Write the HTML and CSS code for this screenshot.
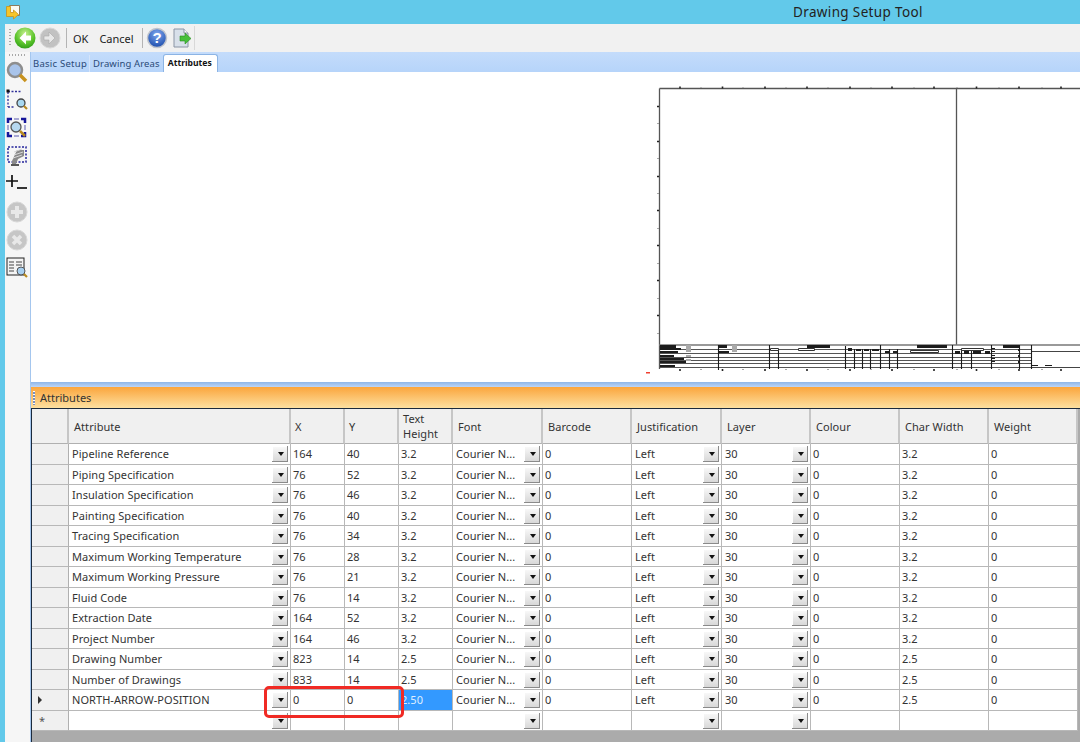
FILE: index.html
```html
<!DOCTYPE html>
<html lang="en">
<head>
<meta charset="utf-8">
<title>Drawing Setup Tool</title>
<link rel="stylesheet" href="styles.css">
</head>
<body>
<div class="app">
  <header class="titlebar">
    <svg class="appicon" width="16" height="16" viewBox="0 0 16 16"><path d="M4.500 1.500h10v10h-10z" fill="#fbfbf4" stroke="#8c7c60"/><path d="M1.500 2.500h4v6h3V6l5 4.500-5 4.500v-2.500h-7z" fill="#f7c52a" stroke="#c8921a" stroke-width=".8"/></svg>
    <div class="apptitle">Drawing Setup Tool</div>
  </header>
  <div class="main">
    <div class="toolbar">
      <div class="grip"></div>
      <svg class="tb back" width="22" height="22" viewBox="0 0 22 22"><defs><radialGradient id="g" cx=".5" cy=".3" r=".75"><stop offset="0" stop-color="#c8f090"/><stop offset=".6" stop-color="#5cc42c"/><stop offset="1" stop-color="#2a9a14"/></radialGradient></defs><circle cx="11" cy="11" r="10.500" fill="url(#g)"/><path d="M12 4.500L5.500 11l6.500 6.500v-4h5v-5h-5z" fill="#fff"/></svg>
      <svg class="tb fwd" width="22" height="22" viewBox="0 0 22 22"><circle cx="11" cy="11" r="10" fill="#c2c2c2" stroke="#d8d8d8"/><path d="M10 5l6 6-6 6v-4H5V9h5z" fill="#e8e8e8" stroke="#a8a8a8" stroke-width=".6"/></svg>
      <span class="sep s1"></span>
      <span class="tbtext ok">OK</span>
      <span class="tbtext cancel">Cancel</span>
      <span class="sep s2"></span>
      <svg class="tb help" width="22" height="22" viewBox="0 0 22 22"><defs><radialGradient id="h" cx=".5" cy=".3" r=".75"><stop offset="0" stop-color="#7fa8ee"/><stop offset="1" stop-color="#1546a8"/></radialGradient></defs><circle cx="11" cy="11" r="9.500" fill="url(#h)" stroke="#c0c4cc" stroke-width="1.500"/><text x="11" y="16" text-anchor="middle" class="qm">?</text></svg>
      <svg class="tb export" width="20" height="22" viewBox="0 0 20 22"><path d="M2 2h10l4 4v14H2z" fill="#d8e0ea" stroke="#8a94a4"/><path d="M12 2v4h4" fill="#fff" stroke="#8a94a4"/><path d="M8 9h5V6l6 5.500-6 5.500v-3H8z" fill="#46c03a" stroke="#2c8a24" stroke-width=".6"/></svg>
      <span class="tbend"></span>
    </div>
    <div class="body">
      <aside class="side">
        <div class="sgrip"></div>
        <svg width="22" height="22" viewBox="0 0 22 22"><circle cx="9" cy="9" r="7" fill="#a9c4ea" stroke="#8e8e8e" stroke-width="2.500"/><path d="M14 14l6 6" stroke="#c8921e" stroke-width="3.500"/></svg>
        <svg width="22" height="22" viewBox="0 0 22 22"><path d="M2 2.500h13M2 3v15M2 18h6" stroke="#30309a" stroke-width="1.300" stroke-dasharray="2 1.500" fill="none"/><rect x="0.500" y="0.500" width="3" height="3" fill="#111"/><circle cx="15" cy="14" r="4" fill="#a8d8f0" stroke="#444" stroke-width="1.300"/><path d="M18 17l3 3" stroke="#b88a20" stroke-width="2.200"/></svg>
        <svg width="22" height="22" viewBox="0 0 22 22"><path d="M2 6V2h4M15 2h4v4M19 15v4h-4M6 19H2v-4" fill="none" stroke="#16169a" stroke-width="2.500"/><path d="M8 2h5M2 8v5M19 8v5M8 19h5" stroke="#5a5ab0"/><circle cx="10" cy="10" r="5" fill="#b6d8f0" stroke="#555" stroke-width="1.300"/><path d="M14 14l5 5" stroke="#b88a20" stroke-width="2.500"/></svg>
        <svg width="22" height="22" viewBox="0 0 22 22"><rect x="2" y="2" width="18" height="15" fill="none" stroke="#22229a" stroke-dasharray="2 1.500" stroke-width="1.500"/><path d="M6 16l5-11h7v6l-6 3-2 5H6z" fill="#8a8a8a"/><path d="M8 7l8-3M8 10l9-3M7 13l9-3" stroke="#d8d8d8"/><path d="M5 20h8" stroke="#222" stroke-width="1.500"/></svg>
        <svg width="22" height="22" viewBox="0 0 22 22"><path d="M6 2v12M0 8h12" stroke="#111" stroke-width="1.700"/><path d="M11 15h10" stroke="#111" stroke-width="1.700"/></svg>
        <svg width="22" height="22" viewBox="0 0 22 22"><circle cx="11" cy="11" r="10" fill="#c6c6c6" stroke="#d8d8d8"/><path d="M11 5v12M5 11h12" stroke="#e8e8e8" stroke-width="4"/></svg>
        <svg width="22" height="22" viewBox="0 0 22 22"><circle cx="11" cy="11" r="10" fill="#c6c6c6" stroke="#d8d8d8"/><path d="M7 7l8 8M15 7l-8 8" stroke="#e8e8e8" stroke-width="3.500"/></svg>
        <svg width="22" height="22" viewBox="0 0 22 22"><rect x="1" y="1" width="17" height="17" fill="#f4f4f4" stroke="#222"/><path d="M3 5h5M10 5h6M3 8h5M10 8h6M3 11h5M3 14h5" stroke="#444"/><circle cx="15" cy="14" r="4" fill="#a8d0f0" stroke="#555"/><path d="M18 17l3 3" stroke="#b88a20" stroke-width="2.200"/></svg>
      </aside>
      <div class="content">
        <nav class="tabs">
          <span class="tab t1">Basic Setup</span>
          <span class="tab t2">Drawing Areas</span>
          <span class="tab active">Attributes</span>
        </nav>
        <section class="preview">
          <svg class="drawing" width="435" height="290" viewBox="645 86 435 290">
            <path d="M659.500 88.500H1080M659.500 88.500V369M956.500 88.500V345" fill="none" stroke="#555" stroke-width="1.300"/>
            <g stroke="#222" stroke-width="1.600" fill="none">
              <path d="M680 86.500v2M722.500 86.500v2M765 86.500v2M807 86.500v2M850 86.500v2M892 86.500v2M934 86.500v2M976.500 86.500v2M1019 86.500v2M1061 86.500v2"/>
              <path d="M657 106.500h2M657 141.500h2M657 176.500h2M657 210.500h2M657 245.500h2M657 280.500h2M657 315.500h2"/>
              <path d="M680 369v2M722.500 369v2M765 369v2M807 369v2M850 369v2M892 369v2M934 369v2M976.500 369v2M1019 369v2M1061 369v2"/>
            </g>
            <g stroke="#555" stroke-width="1" fill="none">
              <path d="M701 87.500v1M743 87.500v1M786 87.500v1M828 87.500v1M871 87.500v1M914 87.500v1M957 87.500v1M999 87.500v1M1042 87.500v1"/>
              <path d="M657.500 123.500h1M657.500 158.500h1M657.500 193.500h1M657.500 228.500h1M657.500 263.500h1M657.500 298.500h1M657.500 333.500h1"/>
              <path d="M701 369v1M743 369v1M786 369v1M828 369v1M871 369v1M914 369v1M957 369v1M999 369v1M1042 369v1"/>
            </g>
            <path d="M659 345H1080" stroke="#777" stroke-width="1.600"/>
            <path d="M659 349.500H1031M659 353.500H1031M659 357.500H1031M659 360.500H1031M659 363.500H1031M659 367.500H1031" stroke="#555" stroke-width="1.200"/>
            <path d="M1031 351.500H1080M1031 367.500H1080" stroke="#444" stroke-width="1"/>
            <path d="M718.500 345V370M769.500 345V369M778.500 349V369M845.500 346V369M854.500 349V369M862.500 349V369M870.500 349V369M880.500 345V369M889.500 349V369M897.500 349V369M952.500 345V369M961.500 349V369M971.500 349V369M991.500 345V369M1019.500 345V369M1031.500 345V369" stroke="#1a1a1a" stroke-width="1.100"/>
            <g fill="#1c1c1c">
              <rect x="660" y="345" width="16" height="3"/><rect x="660" y="348" width="21" height="2"/><rect x="660" y="351" width="18" height="2"/><rect x="660" y="355" width="14" height="2"/><rect x="660" y="358" width="24" height="2"/><rect x="660" y="361" width="26" height="2"/><rect x="660" y="365" width="15" height="2"/>
              <rect x="719" y="345" width="8" height="3"/><rect x="719" y="351" width="10" height="2"/>
              <rect x="807" y="345" width="23" height="3"/><rect x="917" y="345" width="30" height="3"/><rect x="1003" y="345" width="16" height="3"/>
              <rect x="848" y="348" width="4" height="3"/><rect x="856" y="349" width="5" height="2"/><rect x="864" y="349" width="5" height="2"/><rect x="872" y="349" width="7" height="2"/><rect x="885" y="351" width="5" height="2"/><rect x="893" y="351" width="4" height="2"/>
              <rect x="955" y="351" width="5" height="3"/><rect x="964" y="351" width="5" height="3"/><rect x="973" y="351" width="8" height="3"/><rect x="985" y="351" width="5" height="3"/>
              <rect x="991" y="348" width="4" height="1"/><rect x="991" y="351" width="4" height="1"/><rect x="991" y="355" width="4" height="1"/><rect x="991" y="358" width="4" height="1"/><rect x="991" y="361" width="4" height="1"/>
              <rect x="1018" y="349" width="2" height="2"/><rect x="1018" y="355" width="2" height="2"/><rect x="1018" y="361" width="2" height="2"/>
              <rect x="1032" y="365" width="6" height="1"/><rect x="1045" y="365" width="7" height="1"/>
            </g>
            <g fill="#aaa"><rect x="686" y="345" width="5" height="7"/><rect x="732" y="345" width="5" height="7"/><rect x="686" y="355" width="5" height="2"/><rect x="686" y="359" width="5" height="2"/></g>
            <path d="M770.500 348.500h8v2h-8zM798.500 348.500h16v2h-16zM910.500 350.500h28v2h-28zM961.500 348.500h22v2h-22z" fill="#fff" stroke="#333"/>
            <rect x="646" y="372" width="4" height="1.500" fill="#f04030"/>
          </svg>
        </section>
        <div class="splitter"></div>
        <div class="panelhead"><span class="pgrip"></span>Attributes</div>
        <div class="gridwrap">
          <div class="grid">
            <div class="h"></div><div class="h">Attribute</div><div class="h n">X</div><div class="h n">Y</div><div class="h n">Text Height</div><div class="h">Font</div><div class="h">Barcode</div><div class="h">Justification</div><div class="h">Layer</div><div class="h">Colour</div><div class="h">Char Width</div><div class="h">Weight</div>

            <div class="rh"></div><div class="c dd">Pipeline Reference</div><div class="c">164</div><div class="c">40</div><div class="c">3.2</div><div class="c dd">Courier N...</div><div class="c">0</div><div class="c dd">Left</div><div class="c dd">30</div><div class="c">0</div><div class="c">3.2</div><div class="c">0</div>
            <div class="rh"></div><div class="c dd">Piping Specification</div><div class="c">76</div><div class="c">52</div><div class="c">3.2</div><div class="c dd">Courier N...</div><div class="c">0</div><div class="c dd">Left</div><div class="c dd">30</div><div class="c">0</div><div class="c">3.2</div><div class="c">0</div>
            <div class="rh"></div><div class="c dd">Insulation Specification</div><div class="c">76</div><div class="c">46</div><div class="c">3.2</div><div class="c dd">Courier N...</div><div class="c">0</div><div class="c dd">Left</div><div class="c dd">30</div><div class="c">0</div><div class="c">3.2</div><div class="c">0</div>
            <div class="rh"></div><div class="c dd">Painting Specification</div><div class="c">76</div><div class="c">40</div><div class="c">3.2</div><div class="c dd">Courier N...</div><div class="c">0</div><div class="c dd">Left</div><div class="c dd">30</div><div class="c">0</div><div class="c">3.2</div><div class="c">0</div>
            <div class="rh"></div><div class="c dd">Tracing Specification</div><div class="c">76</div><div class="c">34</div><div class="c">3.2</div><div class="c dd">Courier N...</div><div class="c">0</div><div class="c dd">Left</div><div class="c dd">30</div><div class="c">0</div><div class="c">3.2</div><div class="c">0</div>
            <div class="rh"></div><div class="c dd">Maximum Working Temperature</div><div class="c">76</div><div class="c">28</div><div class="c">3.2</div><div class="c dd">Courier N...</div><div class="c">0</div><div class="c dd">Left</div><div class="c dd">30</div><div class="c">0</div><div class="c">3.2</div><div class="c">0</div>
            <div class="rh"></div><div class="c dd">Maximum Working Pressure</div><div class="c">76</div><div class="c">21</div><div class="c">3.2</div><div class="c dd">Courier N...</div><div class="c">0</div><div class="c dd">Left</div><div class="c dd">30</div><div class="c">0</div><div class="c">3.2</div><div class="c">0</div>
            <div class="rh"></div><div class="c dd">Fluid Code</div><div class="c">76</div><div class="c">14</div><div class="c">3.2</div><div class="c dd">Courier N...</div><div class="c">0</div><div class="c dd">Left</div><div class="c dd">30</div><div class="c">0</div><div class="c">3.2</div><div class="c">0</div>
            <div class="rh"></div><div class="c dd">Extraction Date</div><div class="c">164</div><div class="c">52</div><div class="c">3.2</div><div class="c dd">Courier N...</div><div class="c">0</div><div class="c dd">Left</div><div class="c dd">30</div><div class="c">0</div><div class="c">3.2</div><div class="c">0</div>
            <div class="rh"></div><div class="c dd">Project Number</div><div class="c">164</div><div class="c">46</div><div class="c">3.2</div><div class="c dd">Courier N...</div><div class="c">0</div><div class="c dd">Left</div><div class="c dd">30</div><div class="c">0</div><div class="c">3.2</div><div class="c">0</div>
            <div class="rh"></div><div class="c dd">Drawing Number</div><div class="c">823</div><div class="c">14</div><div class="c">2.5</div><div class="c dd">Courier N...</div><div class="c">0</div><div class="c dd">Left</div><div class="c dd">30</div><div class="c">0</div><div class="c">2.5</div><div class="c">0</div>
            <div class="rh"></div><div class="c dd">Number of Drawings</div><div class="c">833</div><div class="c">14</div><div class="c">2.5</div><div class="c dd">Courier N...</div><div class="c">0</div><div class="c dd">Left</div><div class="c dd">30</div><div class="c">0</div><div class="c">2.5</div><div class="c">0</div>
            <div class="rh cur"></div><div class="c dd">NORTH-ARROW-POSITION</div><div class="c">0</div><div class="c">0</div><div class="c sel">2.50</div><div class="c dd">Courier N...</div><div class="c">0</div><div class="c dd">Left</div><div class="c dd">30</div><div class="c">0</div><div class="c">2.5</div><div class="c">0</div>
            <div class="rh new">*</div><div class="c dd"></div><div class="c"></div><div class="c"></div><div class="c"></div><div class="c dd"></div><div class="c"></div><div class="c dd"></div><div class="c dd"></div><div class="c"></div><div class="c"></div><div class="c"></div>
          </div>
          <div class="callout"></div>
        </div>
      </div>
    </div>
  </div>
</div>
</body>
</html>
```
FILE: styles.css
```css
* { box-sizing: border-box; }
html, body { margin: 0; height: 100%; overflow: hidden; }
body { font-family: "Noto Sans", "Open Sans", sans-serif; color: #333; }
.app { width: 1080px; height: 742px; background: #62c9ea; display: flex; flex-direction: column; overflow: hidden; }

.titlebar { height: 24px; flex: none; display: flex; align-items: center; padding-left: 5px; }
.appicon { flex: none; }
.apptitle { margin-left: 772px; font-size: 13.5px; letter-spacing: .36px; color: #222; white-space: nowrap; }

.main { flex: 1; min-height: 0; margin-left: 5px; background: #f1f1f1; display: flex; flex-direction: column; }

.toolbar { height: 28px; flex: none; display: flex; align-items: center; padding-left: 4px; background: #f1f1f1; }
.grip { width: 2px; height: 18px; margin-right: 4px; background: repeating-linear-gradient(180deg, #a8a8a8 0 1px, transparent 1px 3px); }
.tb { flex: none; }
.back { margin-left: -1px; }
.fwd { margin-left: 3px; }
.sep { width: 1px; height: 20px; background: #b4b4b4; flex: none; }
.s1 { margin: 0 6px 0 5px; }
.tbtext { font-size: 11px; color: #222; }
.cancel { margin-left: 11px; }
.s2 { margin: 0 3px 0 8px; }
.export { margin-left: 4px; }
.tbend { width: 1px; height: 24px; margin-left: 2px; background: #d8d8d8; }
.qm { font: bold 15px "Liberation Sans", sans-serif; fill: #fff; }

.body { flex: 1; min-height: 0; display: flex; }
.side { width: 25px; flex: none; display: flex; flex-direction: column; align-items: center; gap: 6px; background: #f6f6f6; padding: 2px 1px 0 0; }
.side svg { flex: none; }
.sgrip { width: 16px; height: 2px; margin-bottom: -1px; background: repeating-linear-gradient(90deg, #a8a8a8 0 1px, transparent 1px 3px); }

.content { flex: 1; min-width: 0; display: flex; flex-direction: column; border-left: 1px solid #a4c6ee; }

.tabs { height: 20px; flex: none; display: flex; align-items: flex-end; background: linear-gradient(#c4dcfb, #b6d4fa); padding-left: 2px; }
.tab { font-size: 9.5px; line-height: 17px; color: #2a4a78; letter-spacing: .25px; white-space: nowrap; }
.t1 { padding-right: 2px; border-right: 1px solid #d4e4fa; }
.t2 { margin-left: 3px; letter-spacing: .12px; }
.active { margin-left: 3px; padding: 0 5px 0 4px; height: 18px; background: #fff; border: 1px solid #8cb4e4; border-bottom: 0; border-radius: 3px 3px 0 0; font-weight: 700; font-size: 8.6px; color: #111; letter-spacing: 0; }

.preview { height: 310px; flex: none; background: #fff; display: flex; justify-content: flex-end; align-items: flex-start; padding-top: 14px; overflow: hidden; }
.drawing { flex: none; display: block; }

.splitter { height: 5px; flex: none; background: linear-gradient(#8fb6e8, #bcd6f8); }
.panelhead { height: 21px; flex: none; display: flex; align-items: center; font-size: 11px; color: #333; background: linear-gradient(#fba53c, #fde0a0); padding-left: 2px; }
.pgrip { width: 2px; height: 14px; margin-right: 5px; background: repeating-linear-gradient(180deg, #fff 0 1px, #7a90c0 1px 3px); }

.gridwrap { flex: 1; min-height: 0; position: relative; background: #ababab; border-left: 1px solid #1b2a3c; border-top: 1px solid #1b2a3c; }
.grid { display: grid; grid-template-columns: 37px 222px 54px 54px 54px 90px 89px 90px 89px 89px 89px 89px; grid-template-rows: 35px repeat(14, 20.5px); width: 1046px; background: #fff; font-size: 11px; letter-spacing: .06px; }
.h { background: #f0f0f0; border-right: 2px solid #c6c6c6; border-bottom: 1px solid #b0b0b0; display: flex; align-items: center; padding: 0 4px 0 5px; line-height: 15px; color: #333; }
.n { padding-left: 4px; }
.rh { background: #f0f0f0; border-right: 1px solid #b0b0b0; border-bottom: 1px solid #b8b8b8; display: flex; align-items: center; justify-content: center; position: relative; }
.cur::before { content: ""; position: absolute; left: 6px; top: 6px; border-left: 4px solid #333; border-top: 4px solid transparent; border-bottom: 4px solid transparent; }
.new { font-size: 11px; color: #555; justify-content: flex-start; padding-left: 7px; }
.c { position: relative; background: #fff; border-right: 1px solid #b8b8b8; border-bottom: 1px solid #b8b8b8; display: flex; align-items: center; padding-left: 2px; white-space: nowrap; overflow: hidden; color: #333; }
.dd { padding-left: 3px; }
.dd::after { content: ""; position: absolute; right: 2px; top: 2px; width: 15px; height: 15px; background: linear-gradient(#fafafa, #d8d8d8); border-right: 1px solid #8a8a8a; border-bottom: 1px solid #8a8a8a; box-shadow: inset 1px 1px 0 #fff; }
.dd::before { content: ""; position: absolute; right: 6px; top: 8px; z-index: 1; border-top: 4px solid #111; border-left: 3.500px solid transparent; border-right: 3.500px solid transparent; }
.sel { background: #3399ff; color: #dfeeff; padding-left: 2px; }
.callout { position: absolute; left: 232px; top: 277px; width: 140px; height: 32px; border: 3px solid #f02a24; border-radius: 5px; }
```
